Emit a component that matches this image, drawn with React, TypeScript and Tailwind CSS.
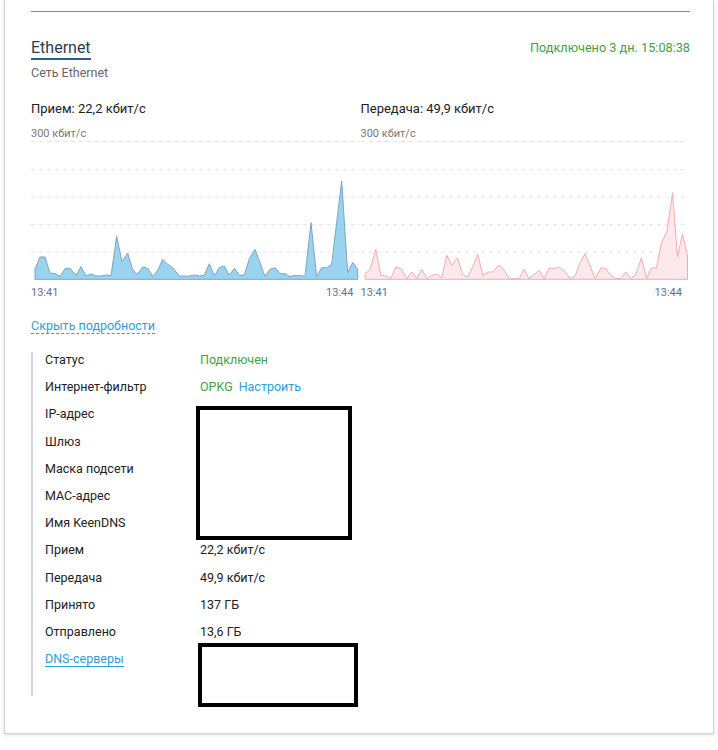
import React from 'react';

const RX: [number, number][] = [
  [105, 385], [120, 348], [135, 348], [150, 397], [165, 397], [180, 407], [195, 383], [210, 382], [228, 403], [243, 377],
  [258, 405], [273, 399], [288, 405], [303, 405], [318, 402], [333, 404], [350, 286], [366, 362], [383, 336], [398, 387],
  [413, 400], [428, 378], [443, 382], [458, 406], [473, 388], [488, 355], [503, 370], [518, 380], [538, 405], [568, 405],
  [583, 402], [598, 405], [613, 403], [628, 368], [643, 405], [658, 380], [673, 375], [688, 403], [703, 382], [718, 403],
  [733, 402], [748, 353], [765, 325], [780, 365], [795, 407], [810, 385], [825, 380], [840, 398], [855, 398], [870, 407],
  [885, 403], [900, 404], [915, 406], [933, 245], [950, 407], [965, 380], [980, 380], [995, 370], [1025, 120], [1043, 395],
  [1058, 364], [1073, 385],
];

const TX: [number, number][] = [
  [20, 398], [35, 385], [52, 325], [67, 403], [82, 405], [97, 413], [112, 378], [127, 383], [145, 413], [160, 393],
  [175, 413], [190, 385], [205, 413], [220, 403], [235, 400], [250, 410], [265, 343], [280, 373], [297, 350], [312, 400],
  [327, 408], [342, 380], [358, 340], [373, 403], [388, 393], [403, 393], [420, 373], [435, 385], [452, 413], [467, 413],
  [482, 413], [497, 385], [512, 413], [527, 400], [542, 388], [557, 413], [572, 381], [587, 383], [602, 378], [617, 390],
  [635, 413], [650, 405], [665, 365], [680, 338], [695, 375], [710, 413], [727, 381], [742, 383], [757, 403], [772, 413],
  [787, 413], [802, 393], [817, 413], [832, 400], [849, 350], [864, 413], [879, 381], [894, 381], [909, 305], [925, 273],
  [942, 155], [957, 348], [972, 278], [987, 345],
];

const GRID = [0.5, 28.5, 56, 83.5, 111];

function Chart({ data, dx, fill, stroke, gridW }: { data: [number, number][]; dx: number; fill: string; stroke: string; gridW: number }) {
  const pts = data.map(([px, py]) => [px / 3 - dx, py / 3] as [number, number]);
  const base = 138.3;
  const first = pts[0][0];
  const last = pts[pts.length - 1][0];
  const line = pts.map((p) => p.join(',')).join(' ');
  const area = `${first},${base} ${line} ${last},${base}`;
  return (
    <svg width="329" height="140" className="block">
      {GRID.map((y) => (
        <line key={y} x1="0" x2={gridW} y1={y} y2={y} stroke="#e3e3e3" strokeDasharray="4 4" strokeWidth="1" />
      ))}
      <polygon points={area} fill={fill} stroke="none" />
      <polyline points={area} fill="none" stroke={stroke} strokeWidth="1" />
      <line x1={first} x2={last} y1={base} y2={base} stroke={stroke} strokeWidth="1" />
    </svg>
  );
}

const ROWS: { label: string; value?: React.ReactNode; link?: boolean }[] = [
  { label: 'Статус', value: <span className="text-[#43a047]">Подключен</span> },
  {
    label: 'Интернет-фильтр',
    value: (
      <span>
        <span className="text-[#43a047]">OPKG</span>
        <span className="ml-[6px] text-[#2a9fd8]">Настроить</span>
      </span>
    ),
  },
  { label: 'IP-адрес' },
  { label: 'Шлюз' },
  { label: 'Маска подсети' },
  { label: 'MAC-адрес' },
  { label: 'Имя KeenDNS' },
  { label: 'Прием', value: '22,2 кбит/с' },
  { label: 'Передача', value: '49,9 кбит/с' },
  { label: 'Принято', value: '137 ГБ' },
  { label: 'Отправлено', value: '13,6 ГБ' },
  { label: 'DNS-серверы', link: true },
];

export default function App() {
  return (
    <div className="w-[718px] h-[750px] bg-white font-['Roboto',sans-serif] text-[#222]">
      <div className="ml-[4px] w-[710px] h-[734px] bg-white border border-t-0 border-[#d4d4d4] shadow-[0_1px_3px_rgba(0,0,0,0.15)] pl-[26px] pr-[23px] pt-[11px]">
        <div className="h-px bg-[#3aa0d8]" />

        <div className="mt-[25px] flex items-start justify-between">
          <div className="text-[16px] leading-[21px] text-[#2c3e50] border-b-2 border-[#2e5c8a]">Ethernet</div>
          <div className="text-[12.7px] leading-[21px] text-[#43a047]">Подключено 3 дн. 15:08:38</div>
        </div>

        <div className="mt-[5px] text-[12.5px] leading-[16px] text-[#666]">Сеть Ethernet</div>

        <div className="mt-[20px] grid grid-cols-2">
          <div>
            <div className="text-[13px] leading-[16px]">Прием: 22,2 кбит/с</div>
            <div className="mt-[10px] text-[11px] leading-[14px] text-[#777]">300 кбит/с</div>
            <div>
              <Chart data={RX} dx={31} fill="#9ad3ef" stroke="#7aa6c2" gridW={329} />
            </div>
            <div className="mt-[5px] pr-[7px] flex justify-between text-[11px] leading-[14px] text-[#6b7080]">
              <span>13:41</span>
              <span>13:44</span>
            </div>
          </div>
          <div>
            <div className="text-[13px] leading-[16px]">Передача: 49,9 кбит/с</div>
            <div className="mt-[10px] text-[11px] leading-[14px] text-[#777]">300 кбит/с</div>
            <div>
              <Chart data={TX} dx={2.5} fill="#fde9eb" stroke="#f4aab2" gridW={323} />
            </div>
            <div className="mt-[5px] pr-[8px] flex justify-between text-[11px] leading-[14px] text-[#6b7080]">
              <span>13:41</span>
              <span>13:44</span>
            </div>
          </div>
        </div>

        <div className="mt-[18px] text-[12.5px] leading-[16px]">
          <span className="text-[#2a9fd8] border-b border-dashed border-[#2a9fd8]">Скрыть подробности</span>
        </div>

        <div className="relative mt-[18px] border-l-2 border-[#d6d6d6] pl-[12px] h-[344px]">
          {ROWS.map((r) => (
            <div key={r.label} className="flex h-[27.2px] text-[12.5px] leading-[16px]">
              <div className="w-[155px]">
                {r.link ? (
                  <span className="text-[#2a9fd8] border-b border-[#2a9fd8]">{r.label}</span>
                ) : (
                  r.label
                )}
              </div>
              <div>{r.value}</div>
            </div>
          ))}
          <div className="absolute left-[163px] top-[54px] w-[156px] h-[134px] border-4 border-black bg-white" />
          <div className="absolute left-[165px] top-[291px] w-[160px] h-[64px] border-4 border-black bg-white" />
        </div>
      </div>
    </div>
  );
}
